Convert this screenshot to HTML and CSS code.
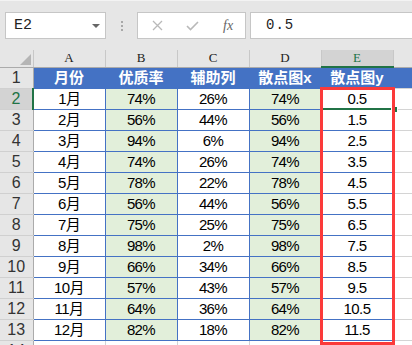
FILE: index.html
```html
<!DOCTYPE html>
<html>
<head>
    <meta charset="UTF-8">
    <title>散点图数据</title>
    <link rel="stylesheet" href="styles.css">
</head>
<body>
<div class="formula-bar">
    <div class="name-box"><span>E2</span><i class="caret"></i></div>
    <div class="grip"><i></i><i></i><i></i></div>
    <div class="fn-box">
        <svg class="ic-cancel" width="11" height="11" viewBox="0 0 11 11"><path d="M1 1L10 10M10 1L1 10" stroke="#b9b9b9" stroke-width="1.3" fill="none"/></svg>
        <svg class="ic-enter" width="13" height="10" viewBox="0 0 13 10"><path d="M1 5L4.5 8.5L12 1" stroke="#b9b9b9" stroke-width="1.6" fill="none"/></svg>
        <span class="fx">fx</span>
    </div>
    <div class="formula">0.5</div>
</div>

<div class="grid">
    <table class="sheet">
        <colgroup>
            <col class="c-row">
            <col class="c-data"><col class="c-data"><col class="c-data"><col class="c-data"><col class="c-data">
            <col class="c-rest">
        </colgroup>
        <thead>
        <tr>
            <th class="corner"><i class="tri"></i></th>
            <th>A</th><th>B</th><th>C</th><th>D</th><th class="sel">E</th><th></th>
        </tr>
        </thead>
        <tbody>
        <tr class="head">
            <th>1</th><td>月份</td><td>优质率</td><td>辅助列</td><td>散点图x</td><td>散点图y</td><td class="blank"></td>
        </tr>
        <tr><th class="sel">2</th><td>1月</td><td class="fill">74%</td><td>26%</td><td class="fill">74%</td><td>0.5</td><td class="blank"></td></tr>
        <tr><th>3</th><td>2月</td><td class="fill">56%</td><td>44%</td><td class="fill">56%</td><td>1.5</td><td class="blank"></td></tr>
        <tr><th>4</th><td>3月</td><td class="fill">94%</td><td>6%</td><td class="fill">94%</td><td>2.5</td><td class="blank"></td></tr>
        <tr><th>5</th><td>4月</td><td class="fill">74%</td><td>26%</td><td class="fill">74%</td><td>3.5</td><td class="blank"></td></tr>
        <tr><th>6</th><td>5月</td><td class="fill">78%</td><td>22%</td><td class="fill">78%</td><td>4.5</td><td class="blank"></td></tr>
        <tr><th>7</th><td>6月</td><td class="fill">56%</td><td>44%</td><td class="fill">56%</td><td>5.5</td><td class="blank"></td></tr>
        <tr><th>8</th><td>7月</td><td class="fill">75%</td><td>25%</td><td class="fill">75%</td><td>6.5</td><td class="blank"></td></tr>
        <tr><th>9</th><td>8月</td><td class="fill">98%</td><td>2%</td><td class="fill">98%</td><td>7.5</td><td class="blank"></td></tr>
        <tr><th>10</th><td>9月</td><td class="fill">66%</td><td>34%</td><td class="fill">66%</td><td>8.5</td><td class="blank"></td></tr>
        <tr><th>11</th><td>10月</td><td class="fill">57%</td><td>43%</td><td class="fill">57%</td><td>9.5</td><td class="blank"></td></tr>
        <tr><th>12</th><td>11月</td><td class="fill">64%</td><td>36%</td><td class="fill">64%</td><td>10.5</td><td class="blank"></td></tr>
        <tr><th>13</th><td>12月</td><td class="fill">82%</td><td>18%</td><td class="fill">82%</td><td>11.5</td><td class="blank"></td></tr>
        <tr class="empty"><th>14</th><td></td><td></td><td></td><td></td><td></td><td class="blank"></td></tr>
        </tbody>
    </table>

    <!-- 当前选中单元格 E2 -->
    <div class="selection"><i class="handle"></i></div>
    <!-- 红色标注框 E2:E13 -->
    <div class="mark"></div>
</div>
</body>
</html>
```

FILE: styles.css
```css
* {
    margin: 0;
    padding: 0;
}

body {
    width: 412px;
    height: 345px;
    overflow: hidden;
    background: #fff;
    font-family: "Liberation Sans", "Noto Sans CJK SC", sans-serif;
}

/* 编辑栏 */
.formula-bar {
    display: flex;
    align-items: flex-start;
    box-sizing: border-box;
    height: 50px;
    padding: 11px 0 0 5px;
    background: #e6e6e6;
    border-top: 1px solid #f3f3f3;
}

.name-box {
    display: flex;
    align-items: center;
    box-sizing: border-box;
    width: 101px;
    height: 27px;
    padding-left: 8px;
    background: #fff;
    border: 1px solid #c6c6c6;
    font-family: "Liberation Mono", monospace;
    font-size: 15px;
    color: #222;
}

.name-box .caret {
    margin-left: auto;
    margin-right: 5px;
    border-left: 4px solid transparent;
    border-right: 4px solid transparent;
    border-top: 4px solid #666;
}

.grip {
    display: flex;
    flex-direction: column;
    align-items: center;
    gap: 2px;
    width: 31px;
    padding-top: 9px;
}

.grip i {
    width: 2px;
    height: 2px;
    background: #a8a8a8;
}

.fn-box {
    display: flex;
    align-items: center;
    box-sizing: border-box;
    width: 109px;
    height: 27px;
    padding-left: 14px;
    background: #fff;
    border: 1px solid #c6c6c6;
}

.fn-box .ic-enter {
    margin-left: 23px;
}

.fn-box .fx {
    margin-left: 24px;
    font-family: "Liberation Serif", serif;
    font-style: italic;
    font-size: 14px;
    color: #666;
}

.formula {
    box-sizing: border-box;
    flex: 1;
    height: 27px;
    margin-left: 4px;
    padding-left: 15px;
    line-height: 25px;
    background: #fff;
    border: 1px solid #c6c6c6;
    border-right: 0;
    font-family: "Liberation Mono", monospace;
    font-size: 14px;
    letter-spacing: 1px;
    color: #222;
}

/* 表格区 */
.grid {
    position: relative;
    height: 295px;
    overflow: hidden;
}

.sheet {
    table-layout: fixed;
    border-collapse: collapse;
    width: 424px;
}

.c-row { width: 33px; }
.c-data { width: 72px; }
.c-rest { width: 31px; }

.sheet thead th {
    height: 16px;
    padding: 0;
    background: #e6e6e6;
    border-left: 1px solid #c8c8c8;
    border-right: 1px solid #c8c8c8;
    border-bottom: 1px solid #ababab;
    font-family: "Liberation Serif", serif;
    font-weight: normal;
    font-size: 13px;
    line-height: 16px;
    color: #222;
    text-align: center;
}

.sheet thead th.corner {
    position: relative;
    border-left: 0;
}

.corner .tri {
    position: absolute;
    right: 2px;
    bottom: 2px;
    border-left: 11px solid transparent;
    border-bottom: 11px solid #b5b5b5;
}

.sheet thead th.sel {
    background: #d3d3d3;
    border-bottom: 2px solid #217346;
    color: #217346;
}

.sheet tbody th {
    height: 20px;
    padding: 0;
    background: #e6e6e6;
    border-bottom: 1px solid #d0d0d0;
    border-right: 1px solid #ababab;
    font-weight: normal;
    font-size: 16px;
    line-height: 20px;
    color: #333;
    text-align: center;
}

.sheet tbody th.sel {
    background: #d3d3d3;
    border-right: 2px solid #217346;
    color: #217346;
}

.sheet td {
    height: 20px;
    padding: 0;
    border: 1px solid #4472c4;
    font-family: "Liberation Sans", "Noto Sans CJK SC", sans-serif;
    font-size: 15px;
    line-height: 20px;
    letter-spacing: -0.6px;
    color: #000;
    text-align: center;
    white-space: nowrap;
    overflow: hidden;
}

.sheet td.fill {
    background: #e2efda;
}

.sheet tr.head td {
    background: #4472c4;
    font-size: 15px;
    letter-spacing: 0;
    font-weight: bold;
    color: #fff;
}

.sheet td.blank {
    border: 0;
    border-bottom: 1px solid #d4d4d4;
}

.sheet tr.empty td {
    border: 0;
    border-right: 1px solid #d4d4d4;
}

.selection {
    position: absolute;
    left: 320px;
    top: 37px;
    box-sizing: border-box;
    width: 75px;
    height: 23px;
    border: 2px solid #217346;
}

.selection .handle {
    position: absolute;
    right: -5px;
    bottom: -5px;
    width: 5px;
    height: 5px;
    background: #217346;
    border: 1px solid #fff;
}

.mark {
    position: absolute;
    left: 320px;
    top: 37px;
    box-sizing: border-box;
    width: 75px;
    height: 258px;
    border: 3px solid #fb3a3a;
}
```
